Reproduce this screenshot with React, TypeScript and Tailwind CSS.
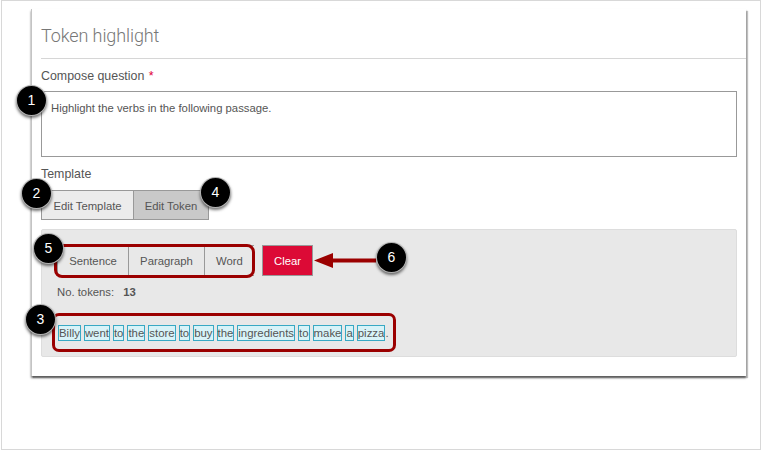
const tokens = ["Billy", "went", "to", "the", "store", "to", "buy", "the", "ingredients", "to", "make", "a", "pizza"];

function Badge({ n, className }: { n: number; className: string }) {
  return (
    <div className={`absolute flex h-[31px] w-[31px] items-center justify-center rounded-full border border-white/70 bg-black text-[14px] text-white shadow-[0_2px_3px_rgba(0,0,0,0.55)] ${className}`}>
      {n}
    </div>
  );
}

export default function App() {
  return (
    <div className="relative h-[452px] w-[762px] overflow-hidden bg-white font-['Liberation_Sans',sans-serif] text-[#555]">
      <div className="ml-[1px] h-[450px] w-[760px] border border-[#d8d8d8] pl-[29px] pt-[8px]">
        <div className="h-[367px] w-[715px] border-l border-[#c4c4c4] bg-white pl-[9px] shadow-[2px_2px_1px_rgba(0,0,0,0.22),0_2px_2px_rgba(0,0,0,0.55)]">
          <div className="flex h-[50px] items-end border-b border-[#d6d6d6] pb-[11px] font-['Roboto',sans-serif] text-[18px] font-light leading-[22px] tracking-[-0.1px] text-[#777]">
            Token highlight
          </div>
          <div className="pr-[9px]">
            <div className="mt-[10px] h-[14px] text-[12.4px] leading-[14px]">
              Compose question <span className="ml-[1px] text-[#e0003a]">*</span>
            </div>
            <div className="mt-[8px] h-[66px] border border-[#999] px-[9px] pt-[9px] text-[11.3px] leading-[14px]">
              Highlight the verbs in the following passage.
            </div>
            <div className="mt-[10px] h-[14px] text-[12.4px] leading-[14px]">Template</div>
            <div className="mt-[9px] flex h-[30px] text-[11.3px]">
              <div className="flex w-[93px] items-center justify-center border border-[#999] bg-[#ececec] pt-[2px]">Edit Template</div>
              <div className="-ml-px flex w-[76px] items-center justify-center border border-[#999] bg-[#c9c9c9] pt-[2px]">Edit Token</div>
            </div>
            <div className="mt-[9px] h-[128px] rounded-[2px] border border-[#ddd] bg-[#e8e8e8] pl-[15px] pt-[15px] text-[11.3px]">
              <div className="flex h-[31px]">
                <div className="flex h-full items-center border-y border-l border-[#999]">
                  <div className="flex h-full w-[70px] items-center justify-center pt-[2px]">Sentence</div>
                  <div className="flex h-full w-[76px] items-center justify-center border-l border-[#999] pt-[2px]">Paragraph</div>
                  <div className="flex h-full w-[50px] items-center justify-center border-l border-[#999] pt-[2px]">Word</div>
                </div>
                <div className="ml-[8px] flex w-[51px] items-center justify-center border border-[#999] bg-[#dc0a36] pt-[2px] text-white">Clear</div>
              </div>
              <div className="mt-[9px] flex h-[14px] items-center leading-[14px]">
                <span>No. tokens:</span>
                <span className="ml-[9px] font-bold">13</span>
              </div>
              <div className="ml-[1px] mt-[26px] flex h-[16px] items-center text-[11.4px] leading-[15px]">
                {tokens.map((t, i) => (
                  <span key={i} className={`h-[16px] border border-[#38a9c4] bg-[#d8f3f8] ${i < tokens.length - 1 ? "mr-[3px]" : ""}`}>
                    {t}
                  </span>
                ))}
                <span>.</span>
              </div>
            </div>
          </div>
        </div>
      </div>

      <div className="absolute left-[54px] top-[244px] h-[34px] w-[201px] rounded-[8px] border-[3px] border-[#9b0000]" />
      <div className="absolute left-[52px] top-[313px] h-[39px] w-[344px] rounded-[7px] border-[3px] border-[#9b0000]" />
      <svg className="absolute left-[310px] top-[250px]" width="70" height="22" viewBox="0 0 70 22">
        <path d="M4 10.5 L23 3 L23 8.5 L66 8.5 L66 12.5 L23 12.5 L23 18 Z" fill="#9b0000" />
      </svg>

      <Badge n={1} className="left-[16px] top-[85px]" />
      <Badge n={2} className="left-[21px] top-[178px]" />
      <Badge n={4} className="left-[200px] top-[177px]" />
      <Badge n={5} className="left-[33px] top-[233px]" />
      <Badge n={3} className="left-[25px] top-[304px]" />
      <Badge n={6} className="left-[376px] top-[242px]" />
    </div>
  );
}
